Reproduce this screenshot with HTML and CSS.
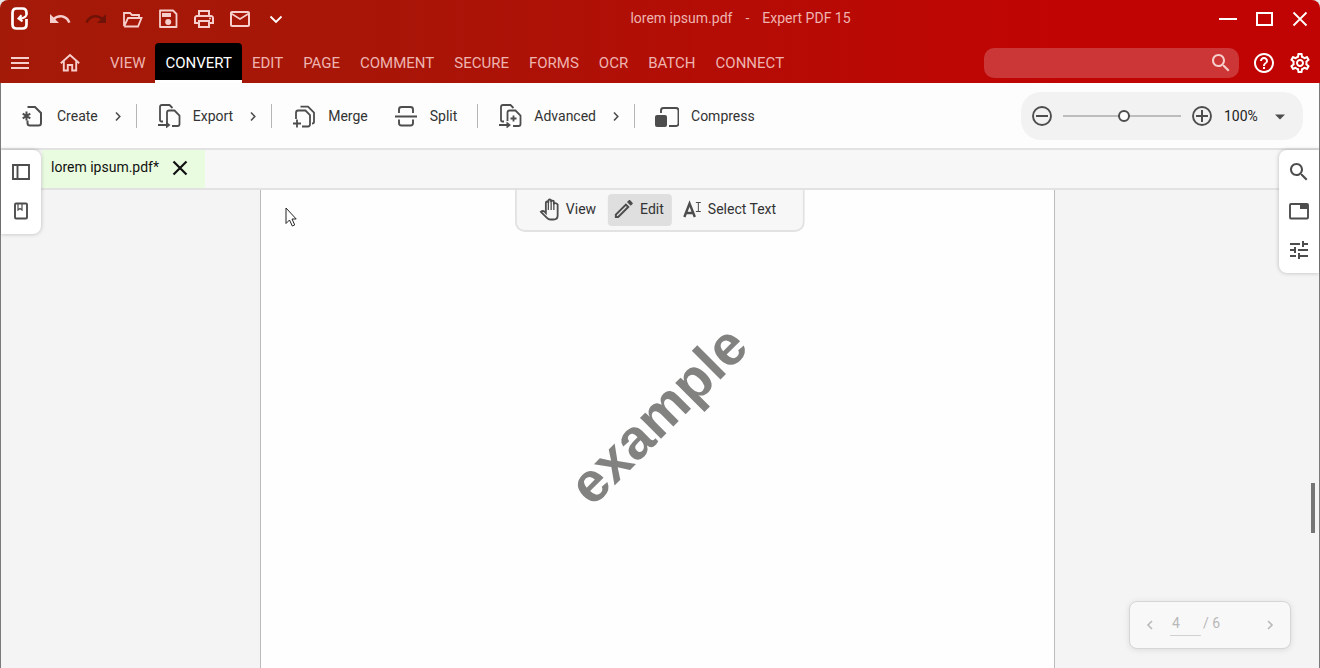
FILE: index.html
```html
<!DOCTYPE html>
<html lang="en">
<head>
    <meta charset="UTF-8">
    <meta name="viewport" content="width=device-width, initial-scale=1.0">
    <title>lorem ipsum.pdf - Expert PDF 15</title>
    <link rel="stylesheet" href="styles.css">
</head>
<body>
    <header class="header">
        <div class="title-bar">
            <div class="quick-access">
                <svg class="logo" width="24" height="26" viewBox="0 0 24 26"><g fill="none" stroke="#fff"><path d="M18.500 8.500V7Q18.500 2.500 14.500 2.500H8.500Q4.500 2.500 4.500 7V18.500Q4.500 22.500 8.500 22.500H14.500Q18.500 22.500 18.500 18.500V13" stroke-width="2.700"/><path d="M18.800 8Q17.500 12.500 11.500 12.600M13.500 9.300L10.600 12.600L14.500 15.300" stroke-width="2.200"/></g></svg>
                <button class="icon-btn" aria-label="Undo"><svg viewBox="0 0 24 24"><path d="M12.500 8c-2.650 0-5.050.99-6.900 2.600L2 7v9h9l-3.620-3.620c1.390-1.160 3.160-1.880 5.120-1.880 3.540 0 6.550 2.310 7.600 5.500l2.370-.780C21.080 11.030 17.150 8 12.500 8z"/></svg></button>
                <button class="icon-btn redo" aria-label="Redo" disabled><svg viewBox="0 0 24 24"><path d="M18.400 10.600C16.550 8.990 14.150 8 11.500 8c-4.650 0-8.580 3.030-9.960 7.220L3.900 16c1.050-3.190 4.050-5.500 7.600-5.500 1.950 0 3.730.72 5.120 1.880L13 16h9V7l-3.600 3.600z"/></svg></button>
                <button class="icon-btn" aria-label="Open"><svg viewBox="0 0 24 24"><path d="M4 19V6h6l2 2h7v3M4 19.500h14l3.500-8.500H8L4 19.500" fill="none" stroke="currentColor" stroke-width="1.800"/></svg></button>
                <button class="icon-btn" aria-label="Save"><svg viewBox="0 0 24 24"><path d="M4 3.500h13l3.500 3.500V20H4z" fill="none" stroke="currentColor" stroke-width="1.800" stroke-linejoin="round"/><path d="M6 6h9v4H6z"/><circle cx="12.200" cy="15" r="3"/></svg></button>
                <button class="icon-btn" aria-label="Print"><svg viewBox="0 0 24 24"><path d="M19 8h-1V3H6v5H5c-1.660 0-3 1.340-3 3v6h4v4h12v-4h4v-6c0-1.660-1.340-3-3-3zM8 5h8v3H8V5zm8 14H8v-4h8v4zm4-4h-2v-2H6v2H4v-4c0-.55.450-1 1-1h14c.550 0 1 .450 1 1v4z"/><circle cx="18" cy="11.500" r="1"/></svg></button>
                <button class="icon-btn" aria-label="Mail"><svg viewBox="0 0 24 24"><path d="M22 6c0-1.100-.9-2-2-2H4c-1.100 0-2 .9-2 2v12c0 1.100.9 2 2 2h16c1.100 0 2-.9 2-2V6zm-2 0l-8 5-8-5h16zm0 12H4V8l8 5 8-5v10z"/></svg></button>
                <button class="icon-btn bright" aria-label="More"><svg viewBox="0 0 24 24"><path d="M6.500 9.500L12 15l5.500-5.500" fill="none" stroke="currentColor" stroke-width="1.800"/></svg></button>
            </div>
            <div class="title"><span>lorem ipsum.pdf</span><span>-</span><span>Expert PDF 15</span></div>
            <div class="window-controls">
                <button class="icon-btn bright" aria-label="Minimize"><svg viewBox="0 0 24 24"><path d="M3 11h18v2H3z"/></svg></button>
                <button class="icon-btn bright" aria-label="Maximize"><svg viewBox="0 0 24 24"><path d="M5 6h15v12H5z" fill="none" stroke="currentColor" stroke-width="2"/></svg></button>
                <button class="icon-btn bright" aria-label="Close"><svg viewBox="0 0 24 24"><path d="M5.500 5.500l13 13M18.500 5.500l-13 13" fill="none" stroke="currentColor" stroke-width="1.800"/></svg></button>
            </div>
        </div>

        <div class="menu-bar">
            <button class="icon-btn" aria-label="Menu"><svg viewBox="0 0 24 24"><path d="M3 6h18v2H3zM3 11h18v2H3zM3 16h18v2H3z"/></svg></button>
            <button class="icon-btn home" aria-label="Home"><svg viewBox="0 0 24 24"><path d="M2.800 12.300L12 4l9.200 8.300M5.800 10v9.500h4V14h4.400v5.500h4V10" fill="none" stroke="currentColor" stroke-width="1.900"/></svg></button>
            <nav class="menu">
                <a href="#">VIEW</a>
                <a href="#" class="active">CONVERT</a>
                <a href="#">EDIT</a>
                <a href="#">PAGE</a>
                <a href="#">COMMENT</a>
                <a href="#">SECURE</a>
                <a href="#">FORMS</a>
                <a href="#">OCR</a>
                <a href="#">BATCH</a>
                <a href="#">CONNECT</a>
            </nav>
            <div class="search">
                <input type="text" aria-label="Search">
                <button class="icon-btn" aria-label="Search"><svg viewBox="0 0 24 24"><path d="M15.500 14h-.79l-.28-.27C15.410 12.590 16 11.110 16 9.500 16 5.910 13.090 3 9.500 3S3 5.910 3 9.500 5.910 16 9.500 16c1.610 0 3.090-.59 4.230-1.570l.27.28v.79l5 4.990L20.490 19l-4.990-5zm-6 0C7.010 14 5 11.990 5 9.500S7.010 5 9.500 5 14 7.010 14 9.500 11.990 14 9.500 14z"/></svg></button>
            </div>
            <button class="icon-btn bright" aria-label="Help"><svg viewBox="0 0 24 24"><path d="M11 18h2v-2h-2v2zm1-16C6.480 2 2 6.480 2 12s4.480 10 10 10 10-4.480 10-10S17.520 2 12 2zm0 18c-4.410 0-8-3.590-8-8s3.590-8 8-8 8 3.590 8 8-3.590 8-8 8zm0-14c-2.210 0-4 1.790-4 4h2c0-1.100.9-2 2-2s2 .9 2 2c0 2-3 1.750-3 5h2c0-2.250 3-2.500 3-5 0-2.210-1.790-4-4-4z"/></svg></button>
            <button class="icon-btn bright" aria-label="Settings"><svg viewBox="0 0 24 24"><path d="M19.430 12.980c.04-.32.070-.64.070-.98 0-.34-.03-.66-.07-.98l2.110-1.650c.19-.15.240-.42.120-.64l-2-3.460c-.09-.16-.26-.25-.44-.25-.06 0-.12.010-.17.030l-2.490 1c-.52-.4-1.080-.73-1.690-.98l-.38-2.650C14.460 2.180 14.250 2 14 2h-4c-.25 0-.46.180-.49.420l-.38 2.650c-.61.250-1.170.59-1.690.98l-2.490-1c-.06-.02-.12-.03-.18-.03-.17 0-.34.090-.43.250l-2 3.460c-.13.220-.07.490.120.64l2.110 1.650c-.04.320-.07.650-.07.980 0 .330.030.660.070.98l-2.110 1.650c-.19.150-.24.420-.12.640l2 3.460c.09.160.26.250.44.250.06 0 .12-.01.170-.03l2.490-1c.52.400 1.080.730 1.690.98l.38 2.650c.03.240.240.420.490.420h4c.25 0 .460-.18.490-.42l.38-2.650c.61-.25 1.170-.59 1.690-.98l2.490 1c.06.020.12.030.18.030.17 0 .34-.09.430-.25l2-3.460c.12-.22.070-.49-.12-.64l-2.110-1.650zm-1.980-1.710c.04.310.050.520.050.730 0 .210-.02.430-.05.730l-.14 1.130.89.700 1.080.84-.7 1.210-1.270-.51-1.040-.42-.9.680c-.43.320-.84.560-1.250.73l-1.060.43-.16 1.130-.2 1.350h-1.400l-.19-1.350-.16-1.130-1.060-.43c-.43-.18-.83-.41-1.230-.71l-.91-.7-1.060.43-1.270.51-.7-1.210 1.080-.84.89-.7-.14-1.130c-.03-.31-.05-.54-.05-.74s.02-.43.050-.73l.14-1.130-.89-.7-1.080-.84.7-1.210 1.270.51 1.040.42.900-.68c.43-.32.840-.56 1.250-.73l1.060-.43.160-1.130.200-1.350h1.390l.19 1.350.16 1.130 1.060.43c.43.180.830.410 1.230.71l.91.700 1.060-.43 1.270-.51.700 1.210-1.070.85-.89.700.14 1.130zM12 8c-2.210 0-4 1.790-4 4s1.790 4 4 4 4-1.790 4-4-1.790-4-4-4zm0 6c-1.100 0-2-.9-2-2s.9-2 2-2 2 .9 2 2-.9 2-2 2z"/></svg></button>
        </div>
    </header>

    <div class="window">
        <div class="toolbar">
            <div class="group">
                <button class="tool">
                    <svg width="24" height="24" viewBox="0 0 24 24"><g fill="none" stroke="currentColor" stroke-width="2"><path d="M6.500 3H14l6 6v10q0 2.500-2.500 2.500H9Q6.500 21.500 6.500 19v-2.500"/><path d="M5.500 7.500v9M1.700 9.700l7.600 4.600M9.300 9.700l-7.600 4.600"/></g></svg>
                    Create
                    <svg class="more" width="12" height="12" viewBox="0 0 12 12"><path d="M4 2.500L7.800 6.500 4 10.500" fill="none" stroke="currentColor" stroke-width="1.600"/></svg>
                </button>
            </div>
            <div class="group">
                <button class="tool">
                    <svg width="24" height="24" viewBox="0 0 24 24"><g fill="none" stroke="currentColor" stroke-width="1.800"><path d="M6 17.500H4.500Q3 17.500 3 16V3Q3 1 5 1h7.500l3 3M10 19V8.500Q10 6.500 12 6.500h5.500l5 5V20q0 2-2 2H15M1 21h9"/></g><path d="M9 17.500l4.500 3.500L9 24.500z"/></svg>
                    Export
                    <svg class="more" width="12" height="12" viewBox="0 0 12 12"><path d="M4 2.500L7.800 6.500 4 10.500" fill="none" stroke="currentColor" stroke-width="1.600"/></svg>
                </button>
            </div>
            <div class="group plain">
                <button class="tool">
                    <svg width="24" height="24" viewBox="0 0 24 24"><g fill="none" stroke="currentColor" stroke-width="1.800"><path d="M8.500 2.700H16l6 6V18q0 1.500-2 1.500M4 15V9Q4 6.500 6 6.500h7.500l4.500 4.500v9q0 2.500-2 2.500h-6M5 15.500v8M1 19.500h8"/></g></svg>
                    Merge
                </button>
                <button class="tool">
                    <svg width="24" height="24" viewBox="0 0 24 24"><path d="M5 9V5.500Q5 3 7.500 3h9Q19 3 19 5.500V9M5 15.500v3.500Q5 21.500 7.500 21.500h9q2.500 0 2.500-2.500v-3.500M1 12.500h22" fill="none" stroke="currentColor" stroke-width="1.900"/></svg>
                    Split
                </button>
            </div>
            <div class="group">
                <button class="tool">
                    <svg width="24" height="24" viewBox="0 0 24 24"><g fill="none" stroke="currentColor" stroke-width="1.800"><path d="M6 17.500H4.500Q3 17.500 3 16V3Q3 1 5 1h7.500l3 3M9.500 17V8.500Q9.500 6.500 11.500 6.500h6l5 5V20q0 2-2 2H15M1 21h9M15.500 11.500v6M12.500 14.500h6"/></g><path d="M8.500 17.500L13 21l-4.500 3.500z"/></svg>
                    Advanced
                    <svg class="more" width="12" height="12" viewBox="0 0 12 12"><path d="M4 2.500L7.800 6.500 4 10.500" fill="none" stroke="currentColor" stroke-width="1.600"/></svg>
                </button>
            </div>
            <div class="group">
                <button class="tool">
                    <svg width="24" height="24" viewBox="0 0 24 24"><rect x="0" y="11" width="12" height="12" rx="2"/><path d="M6 9V6.500Q6 4 8.500 4H21q2.500 0 2.500 2.500v13Q23.500 22 21 22h-7" fill="none" stroke="currentColor" stroke-width="1.900"/></svg>
                    Compress
                </button>
            </div>

            <div class="zoom">
                <button class="icon-btn" aria-label="Zoom out"><svg viewBox="0 0 24 24"><path d="M6 12h12" stroke="currentColor" stroke-width="2"/><circle cx="12" cy="12" r="9" fill="none" stroke="currentColor" stroke-width="1.900"/></svg></button>
                <input type="range" min="0" max="100" value="52" aria-label="Zoom">
                <button class="icon-btn" aria-label="Zoom in"><svg viewBox="0 0 24 24"><path d="M6 12h12M12 6v12" stroke="currentColor" stroke-width="2"/><circle cx="12" cy="12" r="9" fill="none" stroke="currentColor" stroke-width="1.900"/></svg></button>
                <div class="zoom-level">
                    <select aria-label="Zoom level">
                        <option>100%</option>
                        <option>150%</option>
                    </select>
                    <svg width="24" height="24" viewBox="0 0 24 24"><path d="M7 10.500h10l-5 5z"/></svg>
                </div>
            </div>
        </div>

        <div class="tabs">
            <div class="tab">
                <span>lorem ipsum.pdf*</span>
                <button class="icon-btn" aria-label="Close tab"><svg viewBox="0 0 24 24"><path d="M5.500 5.500l13 13M18.500 5.500l-13 13" fill="none" stroke="currentColor" stroke-width="2.200"/></svg></button>
            </div>
        </div>

        <main class="workspace">
            <div class="page">
                <div class="watermark">example</div>
            </div>

            <div class="mode-bar">
                <button class="mode">
                    <svg width="24" height="24" viewBox="0 0 24 24"><path d="M8 14V6q0-1.500 1.300-1.500T10.500 6V4q0-1.500 1.400-1.500T13.300 4v1q0-1.400 1.400-1.400T16 5v2.500q0-1.400 1.400-1.400T19.800 7.500V18.500q0 4-4 4h-3.300q-2 0-3.200-1.500L3 14.800q1.800-1.600 3.700-.2L8 16z" fill="none" stroke="currentColor" stroke-width="1.800"/><path d="M10.500 5v8M13.300 4v9M16 5v8" fill="none" stroke="currentColor" stroke-width="1.300"/></svg>
                    View
                </button>
                <button class="mode selected">
                    <svg width="24" height="24" viewBox="0 0 24 24"><path d="M14.060 9.020l.92.92L5.920 19H5v-.92l9.060-9.060M17.660 3c-.25 0-.51.100-.7.290l-1.830 1.830 3.750 3.750 1.830-1.830c.39-.39.390-1.020 0-1.410l-2.340-2.340c-.2-.2-.45-.29-.71-.29zm-3.600 3.190L3 17.250V21h3.750L17.810 9.940l-3.750-3.750z"/></svg>
                    Edit
                </button>
                <button class="mode">
                    <svg width="24" height="24" viewBox="0 0 24 24"><path d="M4.500 20L9.700 6.500L15 20M6.500 16h6.500" fill="none" stroke="currentColor" stroke-width="2.400"/><path d="M16 5.500h5M16 14.500h5M18.500 5.500v9" fill="none" stroke="currentColor" stroke-width="1"/></svg>
                    Select Text
                </button>
            </div>

            <svg class="cursor" width="12" height="20" viewBox="0 0 12 20"><path d="M1 1v15.500l3.500-3.500 2.800 6 2.400-1.100L7 12h4.200z" fill="#fff" stroke="#222" stroke-width="1"/></svg>

            <div class="scroll-thumb"></div>

            <div class="pager">
                <button class="icon-btn" aria-label="Previous page"><svg viewBox="0 0 24 24"><path d="M14 8l-4 4 4 4" fill="none" stroke="currentColor" stroke-width="1.600"/></svg></button>
                <input type="text" value="4" aria-label="Page number">
                <span>/ 6</span>
                <button class="icon-btn next" aria-label="Next page"><svg viewBox="0 0 24 24"><path d="M10 8l4 4-4 4" fill="none" stroke="currentColor" stroke-width="1.600"/></svg></button>
            </div>
        </main>

        <aside class="side left">
            <button class="icon-btn" aria-label="Thumbnails"><svg viewBox="0 0 24 24"><path d="M4 5h16v14H4zM8.500 5v14" fill="none" stroke="currentColor" stroke-width="1.900"/></svg></button>
            <button class="icon-btn" aria-label="Bookmarks"><svg viewBox="0 0 24 24"><rect x="6" y="4.500" width="12" height="15" rx="1" fill="none" stroke="currentColor" stroke-width="1.900"/><path d="M9 5v6l2-1.500 2 1.500V5" fill="none" stroke="currentColor" stroke-width="1.200"/></svg></button>
        </aside>
        <aside class="side right">
            <button class="icon-btn" aria-label="Find"><svg viewBox="0 0 24 24"><path d="M15.500 14h-.79l-.28-.27C15.410 12.590 16 11.110 16 9.500 16 5.910 13.090 3 9.500 3S3 5.910 3 9.500 5.910 16 9.500 16c1.610 0 3.090-.59 4.230-1.570l.27.28v.79l5 4.990L20.490 19l-4.990-5zm-6 0C7.010 14 5 11.990 5 9.500S7.010 5 9.500 5 14 7.010 14 9.500 11.990 14 9.500 14z"/></svg></button>
            <button class="icon-btn" aria-label="Layout"><svg viewBox="0 0 24 24"><rect x="3" y="5" width="18" height="14.500" rx="1" fill="none" stroke="currentColor" stroke-width="1.900"/><path d="M13 5h8v5h-8z"/></svg></button>
            <button class="icon-btn" aria-label="Properties"><svg viewBox="0 0 24 24"><path d="M3 17v2h6v-2H3zM3 5v2h10V5H3zm10 16v-2h8v-2h-8v-2h-2v6h2zM7 9v2H3v2h4v2h2V9H7zm14 4v-2H11v2h10zm-6-4h2V7h4V5h-4V3h-2v6z"/></svg></button>
        </aside>
    </div>
</body>
</html>
```
FILE: styles.css
```css
* {
    box-sizing: border-box;
}

body {
    margin: 0;
    min-height: 100vh;
    display: flex;
    flex-direction: column;
    background-color: #e8e8e8;
    color: #333;
    font-family: Roboto, "Liberation Sans", sans-serif;
    font-size: 14px;
    line-height: 20px;
}

button, input, select {
    margin: 0;
    padding: 0;
    border: 0;
    background: none;
    color: inherit;
    font: inherit;
}

svg {
    display: block;
    flex-shrink: 0;
    fill: currentColor;
}

.icon-btn {
    width: 24px;
    height: 24px;
    flex-shrink: 0;
}

/* header */
.header {
    background: linear-gradient(90deg, #a41a08, #a81507 30%, #c00404 80%);
    border-radius: 8px 8px 0 0;
    color: #f6cfcc;
}
.title-bar {
    display: flex;
    align-items: center;
    height: 37px;
}
.quick-access {
    display: flex;
    align-items: center;
    gap: 12px;
    padding: 0 6px 0 8px;
}
.logo {
    margin-right: 4px;
}
.redo {
    color: #6f1207;
}
.bright {
    color: #fff;
}
.title {
    flex: 1;
    display: flex;
    justify-content: center;
    gap: 13px;
    padding-bottom: 2px;
    color: #eeb4b0;
}
.window-controls {
    display: flex;
    gap: 12px;
    padding: 0 8px 0 29px;
}
.menu-bar {
    display: flex;
    align-items: center;
    gap: 12px;
    padding: 6px 8px 0;
}
.home {
    margin-left: 14px;
}
.menu {
    display: flex;
    margin-left: 6px;
    margin-right: auto;
    font-size: 15px;
}
.menu a {
    padding: 10px 10px 7px;
    border-bottom: 3px solid transparent;
    color: #eeb4b0;
    text-decoration: none;
}
.menu .active {
    background-color: #000;
    border-bottom-color: #fff;
    border-radius: 4px 4px 0 0;
    color: #fff;
}
.search {
    display: flex;
    align-items: center;
    width: 255px;
    height: 30px;
    margin-right: 1px;
    padding: 0 6px 0 12px;
    border-radius: 10px;
    background-color: rgba(255, 255, 255, 0.2);
}
.search input {
    flex: 1;
    min-width: 0;
    outline: none;
}

/* window */
.window {
    position: relative;
    flex: 1;
    display: flex;
    flex-direction: column;
    border-left: 1px solid #7a7a7a;
    border-right: 1px solid #7a7a7a;
}

.toolbar {
    display: flex;
    align-items: center;
    height: 67px;
    padding: 0 16px 0 20px;
    background-color: #fdfdfd;
    border-bottom: 2px solid #e2e2e2;
}
.group {
    display: flex;
    align-items: center;
    gap: 26px;
}
.group + .group::before {
    content: "";
    width: 1px;
    height: 24px;
    margin: 0 -6px 0 12px;
    background-color: #b5b5b5;
}
.tool {
    display: flex;
    align-items: center;
    gap: 12px;
    white-space: nowrap;
}
.tool svg {
    color: #4d4d4d;
}
.more {
    margin-left: 2px;
}
.plain {
    padding-right: 8px;
}

.zoom {
    display: flex;
    align-items: center;
    height: 48px;
    margin-left: auto;
    padding: 0 11px 0 9px;
    border-radius: 20px;
    background-color: #f2f2f2;
    color: #4d4d4d;
}
.zoom input {
    appearance: none;
    width: 118px;
    height: 2px;
    margin: 0 9px;
    background-color: #bdbdbd;
}
.zoom input::-webkit-slider-thumb {
    appearance: none;
    width: 12px;
    height: 12px;
    border: 2px solid #4d4d4d;
    border-radius: 50%;
    background-color: #fff;
}
.zoom-level {
    display: grid;
    align-items: center;
    margin-left: 10px;
}
.zoom-level select, .zoom-level svg {
    grid-area: 1 / 1;
}
.zoom-level select {
    appearance: none;
    width: 68px;
    color: #222;
}
.zoom-level svg {
    justify-self: end;
    pointer-events: none;
}

.tabs {
    display: flex;
    height: 40px;
    padding-left: 41px;
    background-color: #f7f7f7;
    border-bottom: 2px solid #e2e2e2;
}
.tab {
    display: flex;
    align-items: center;
    gap: 9px;
    padding: 0 13px 2px 9px;
    background-color: #eafce0;
    color: #111;
}
.tab span {
    padding-bottom: 2px;
}

.workspace {
    position: relative;
    flex: 1;
    display: flex;
    justify-content: center;
    padding-right: 6px;
    background-color: #f4f4f4;
}
.page {
    display: flex;
    align-items: center;
    justify-content: center;
    width: 795px;
    padding: 0 0 28px 2px;
    background-color: #fefefe;
    border-left: 1px solid #bbb;
    border-right: 1px solid #bbb;
}
.watermark {
    transform: rotate(-45deg);
    color: #828280;
    font-family: "Liberation Sans", Arial, sans-serif;
    font-size: 56px;
    font-weight: bold;
    line-height: 64px;
}

/* floating over the page */
.mode-bar {
    position: absolute;
    top: 0;
    left: 50%;
    transform: translateX(-50%);
    display: flex;
    gap: 4px;
    padding: 4px 19px 4px 17px;
    background-color: #f7f7f7;
    border: 2px solid #e2e2e2;
    border-top: 0;
    border-radius: 0 0 10px 10px;
}
.mode {
    display: flex;
    align-items: center;
    gap: 4px;
    height: 32px;
    padding: 0 8px 2px 4px;
    border-radius: 4px;
    white-space: nowrap;
}
.mode svg {
    color: #4d4d4d;
}
.mode.selected {
    background-color: #dfdfdf;
}
.cursor {
    position: absolute;
    top: 17px;
    left: 284px;
}
.scroll-thumb {
    position: absolute;
    right: 4px;
    bottom: 135px;
    width: 4px;
    height: 50px;
    background-color: #757575;
}
.pager {
    position: absolute;
    right: 28px;
    bottom: 19px;
    display: flex;
    align-items: center;
    width: 162px;
    height: 48px;
    padding: 0 8px;
    background-color: #f8f8f8;
    border: 1px solid #d6d6d6;
    border-radius: 8px;
    box-shadow: 0 1px 6px rgba(0, 0, 0, 0.1);
    color: #b9b9b9;
}
.pager input {
    width: 31px;
    margin: 0 2px 4px 8px;
    padding: 2px;
    border-bottom: 1px solid #d0d0d0;
}
.pager span {
    margin-bottom: 4px;
}
.next {
    margin-left: auto;
}

.side {
    position: absolute;
    top: 67px;
    display: flex;
    flex-direction: column;
    gap: 15px;
    padding: 10px 8px 11px;
    background-color: #fff;
    box-shadow: 0 0 4px rgba(0, 0, 0, 0.25);
    color: #4d4d4d;
}
.left {
    left: 0;
    border-radius: 0 8px 8px 0;
}
.right {
    right: 0;
    border-radius: 8px 0 0 8px;
}
```
